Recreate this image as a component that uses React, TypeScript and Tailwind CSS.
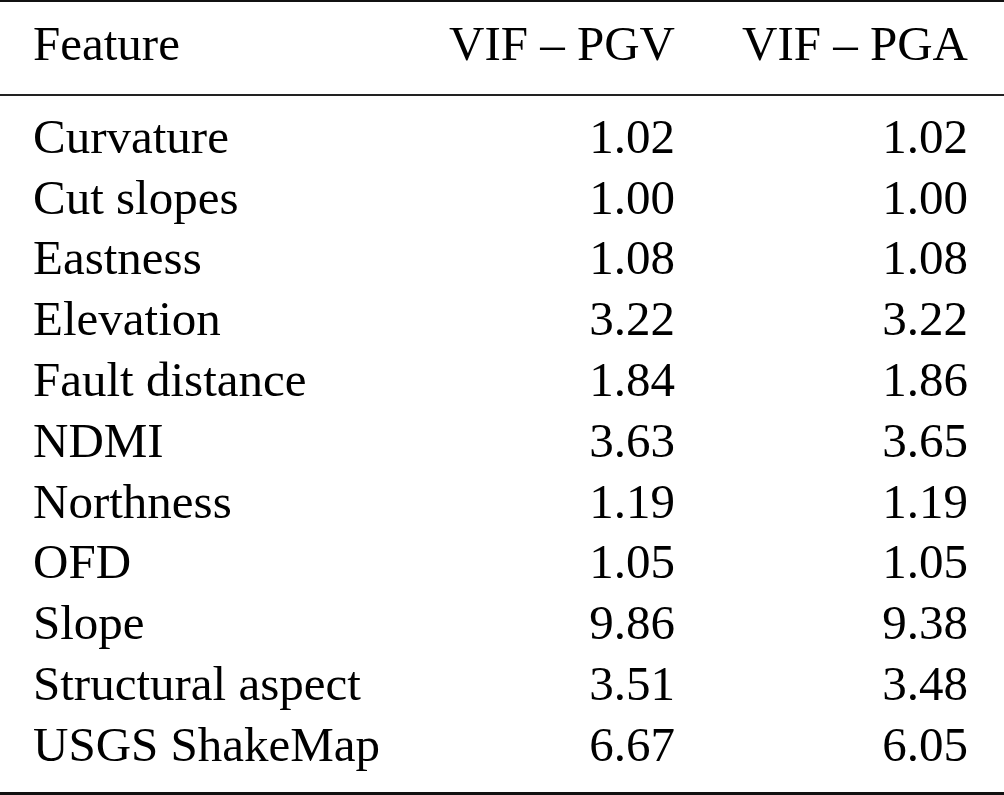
const rows: [string, string, string][] = [
  ["Curvature", "1.02", "1.02"],
  ["Cut slopes", "1.00", "1.00"],
  ["Eastness", "1.08", "1.08"],
  ["Elevation", "3.22", "3.22"],
  ["Fault distance", "1.84", "1.86"],
  ["NDMI", "3.63", "3.65"],
  ["Northness", "1.19", "1.19"],
  ["OFD", "1.05", "1.05"],
  ["Slope", "9.86", "9.38"],
  ["Structural aspect", "3.51", "3.48"],
  ["USGS ShakeMap", "6.67", "6.05"],
];

function Row({ cells }: { cells: [string, string, string] }) {
  return (
    <div className="grid grid-cols-[1fr_250px_293px] pl-[33px] pr-[36px] leading-[60.8px]">
      <span>{cells[0]}</span>
      <span className="text-right">{cells[1]}</span>
      <span className="text-right">{cells[2]}</span>
    </div>
  );
}

export default function App() {
  return (
    <div className="w-[1004px] h-[795px] overflow-hidden bg-white text-black font-['Liberation_Serif','Times_New_Roman',serif] text-[49px] flex flex-col">
      {/* top rule */}
      <div className="h-[2px] bg-[#111]" />

      <div className="pt-[12px]">
        <Row cells={["Feature", "VIF – PGV", "VIF – PGA"]} />
      </div>

      {/* mid rule */}
      <div className="mt-[19px] h-[2px] bg-[#222]" />

      <div className="mt-[11px]">
        {rows.map((r) => (
          <Row key={r[0]} cells={r} />
        ))}
      </div>

      {/* bottom rule */}
      <div className="mt-[16px] h-[3px] bg-[#111]" />
    </div>
  );
}
